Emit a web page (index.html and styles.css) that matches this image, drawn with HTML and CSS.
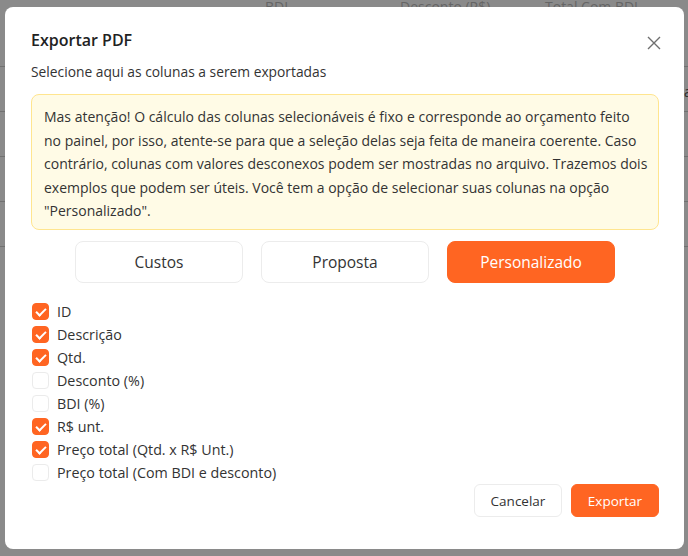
FILE: index.html
```html
<!DOCTYPE html>
<html lang="pt-BR">
<head>
<meta charset="utf-8">
<title>Exportar PDF</title>
<link rel="stylesheet" href="styles.css">
</head>
<body>
<div class="page">
  <div class="page-head">
    <span class="ph ph-bdi">BDI</span>
    <span class="ph ph-desc">Desconto (R$)</span>
    <span class="ph ph-total">Total Com BDI</span>
  </div>
  <div class="page-row r1"><span class="cell">a</span></div>
  <div class="page-row r2"></div>
  <div class="page-row r3"></div>
  <div class="page-row r4"></div>
</div>
<div class="overlay">
  <div class="modal">
    <button class="close" aria-label="Fechar">
      <svg width="14" height="14" viewBox="0 0 14 14"><path d="M1 1L13 13M13 1L1 13" stroke="#6f6f6f" stroke-width="1.4" fill="none"/></svg>
    </button>
    <h2 class="title">Exportar PDF</h2>
    <p class="subtitle">Selecione aqui as colunas a serem exportadas</p>
    <div class="alert">
      <span class="line">Mas atenção! O cálculo das colunas selecionáveis é fixo e corresponde ao orçamento feito</span>
      <span class="line">no painel, por isso, atente-se para que a seleção delas seja feita de maneira coerente. Caso</span>
      <span class="line">contrário, colunas com valores desconexos podem ser mostradas no arquivo. Trazemos dois</span>
      <span class="line">exemplos que podem ser úteis. Você tem a opção de selecionar suas colunas na opção</span>
      <span class="line">"Personalizado".</span>
    </div>
    <div class="presets">
      <button class="preset">Custos</button>
      <button class="preset">Proposta</button>
      <button class="preset active">Personalizado</button>
    </div>
    <ul class="checks">
      <li class="check on"><span class="box"></span>ID</li>
      <li class="check on"><span class="box"></span>Descrição</li>
      <li class="check on"><span class="box"></span>Qtd.</li>
      <li class="check"><span class="box"></span>Desconto (%)</li>
      <li class="check"><span class="box"></span>BDI (%)</li>
      <li class="check on"><span class="box"></span>R$ unt.</li>
      <li class="check on"><span class="box"></span>Preço total (Qtd. x R$ Unt.)</li>
      <li class="check"><span class="box"></span>Preço total (Com BDI e desconto)</li>
    </ul>
    <div class="footer">
      <button class="btn">Cancelar</button>
      <button class="btn primary">Exportar</button>
    </div>
  </div>
</div>
</body>
</html>
```
FILE: styles.css
```css
* { box-sizing: border-box; }
html, body { margin: 0; padding: 0; }
body {
  width: 688px;
  height: 556px;
  overflow: hidden;
  background: #ffffff;
  font-family: "Open Sans", "Noto Sans", "Liberation Sans", sans-serif;
  color: #333;
}
.page { width: 688px; height: 556px; }
.page-head {
  position: relative;
  height: 67px;
  border-bottom: 1px solid #d0d0d0;
  font-size: 14px;
  line-height: 14px;
  color: #bbb;
}
.ph { position: absolute; top: 0; }
.ph-bdi { left: 265px; }
.ph-desc { left: 400px; }
.ph-total { left: 545px; }
.page-row { border-bottom: 1px solid #d0d0d0; height: 45px; }
.r1 { padding: 16px 0 0 684px; font-size: 14px; line-height: 18px; color: #555; }
.cell { white-space: nowrap; }
.overlay {
  position: fixed;
  inset: 0;
  background: rgba(0, 0, 0, 0.46);
}
.modal {
  position: relative;
  margin: 7px 0 0 5px;
  width: 679px;
  height: 542px;
  background: #fff;
  border-radius: 8px;
  padding: 21px 25px 0 26px;
  display: flex;
  flex-direction: column;
}
.close {
  position: absolute;
  top: 29px;
  right: 23px;
  width: 14px;
  height: 14px;
  padding: 0;
  border: 0;
  background: none;
  display: flex;
}
.title {
  margin: 0;
  font-size: 16px;
  line-height: 24px;
  font-weight: 600;
  color: #222;
}
.subtitle {
  margin: 9px 0 0;
  font-size: 13.8px;
  line-height: 22px;
  color: #333;
}
.alert {
  margin-top: 11px;
  background: #fffbe6;
  border: 1px solid #ffe58f;
  border-radius: 8px;
  padding: 10px 12px 6px;
  font-size: 14px;
  line-height: 23.5px;
  color: #333;
  display: flex;
  flex-direction: column;
}
.line { white-space: nowrap; }
.presets {
  margin-top: 11px;
  display: flex;
  justify-content: center;
  gap: 18px;
}
.preset {
  width: 168px;
  height: 42px;
  border: 1px solid #ececec;
  border-radius: 8px;
  background: #fff;
  font-family: inherit;
  font-size: 15.5px;
  color: #333;
  padding: 0;
}
.preset.active {
  background: #ff6522;
  border-color: #ff6522;
  color: #fff;
}
.checks {
  list-style: none;
  margin: 17px 0 0;
  padding: 0;
  display: flex;
  flex-direction: column;
}
.check {
  height: 23.1px;
  display: flex;
  align-items: center;
  font-size: 14.3px;
  color: #333;
}
.box {
  width: 17px;
  height: 17px;
  margin: 0 8px 0 1px;
  border: 1px solid #ebebeb;
  border-radius: 4px;
  background: #fff;
  position: relative;
}
.check.on .box {
  background: #ff6522;
  border-color: #ff6522;
}
.check.on .box::after {
  content: "";
  position: absolute;
  left: 5px;
  top: 2px;
  width: 4px;
  height: 8px;
  border: solid #fff;
  border-width: 0 2px 2px 0;
  transform: rotate(45deg);
}
.footer {
  margin-top: 0;
  display: flex;
  justify-content: flex-end;
  gap: 9px;
}
.btn {
  width: 88px;
  height: 33px;
  border: 1px solid #ececec;
  border-radius: 6px;
  background: #fff;
  font-family: inherit;
  font-size: 13.5px;
  color: #333;
  padding: 0;
}
.btn.primary {
  background: #ff6522;
  border-color: #ff6522;
  color: #fff;
}
```
